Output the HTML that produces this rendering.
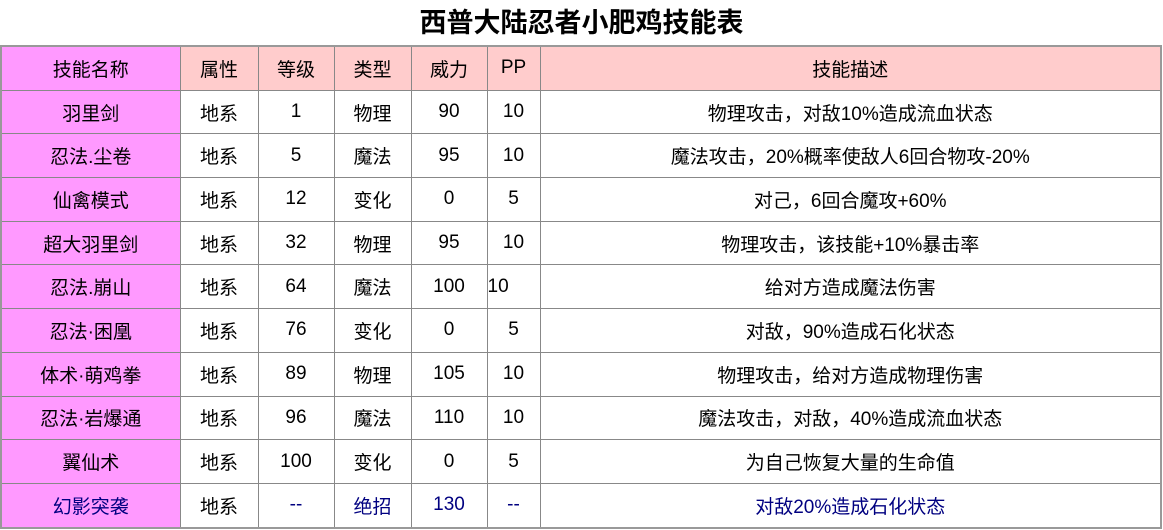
<!DOCTYPE html><html><head><meta charset="utf-8"><style>
body{margin:0;background:#fff;width:1163px;height:530px;overflow:hidden;font-family:"Liberation Sans","Noto Sans CJK SC",sans-serif;}
h1{margin:0;height:45px;line-height:46px;text-align:center;font-size:27px;font-weight:bold;color:#000;}
table{position:absolute;top:45px;left:0;width:1162px;border-collapse:collapse;border:2px solid #999;font-size:19px;}
td{border:1px solid #888;text-align:center;height:42.7px;padding:0;color:#000;}
tr.h td{background:#FFCCCC;}
tr.h td.n,td.n{background:#FF99FF;}
tr.b td{color:#000080;}
tr.b td.k{color:#000;}
</style></head><body>
<h1>西普大陆忍者小肥鸡技能表</h1>
<table>
<colgroup><col style="width:179px"><col style="width:78px"><col style="width:76px"><col style="width:77px"><col style="width:76px"><col style="width:53px"><col></colgroup>
<tr class="h"><td class="n">技能名称</td><td>属性</td><td>等级</td><td>类型</td><td>威力</td><td>PP</td><td>技能描述</td></tr>
<tr><td class="n">羽里剑</td><td>地系</td><td>1</td><td>物理</td><td>90</td><td>10</td><td>物理攻击，对敌10%造成流血状态</td></tr>
<tr><td class="n">忍法.尘卷</td><td>地系</td><td>5</td><td>魔法</td><td>95</td><td>10</td><td>魔法攻击，20%概率使敌人6回合物攻-20%</td></tr>
<tr><td class="n">仙禽模式</td><td>地系</td><td>12</td><td>变化</td><td>0</td><td>5</td><td>对己，6回合魔攻+60%</td></tr>
<tr><td class="n">超大羽里剑</td><td>地系</td><td>32</td><td>物理</td><td>95</td><td>10</td><td>物理攻击，该技能+10%暴击率</td></tr>
<tr><td class="n">忍法.崩山</td><td>地系</td><td>64</td><td>魔法</td><td>100</td><td style="text-align:left">10</td><td>给对方造成魔法伤害</td></tr>
<tr><td class="n">忍法·困凰</td><td>地系</td><td>76</td><td>变化</td><td>0</td><td>5</td><td>对敌，90%造成石化状态</td></tr>
<tr><td class="n">体术·萌鸡拳</td><td>地系</td><td>89</td><td>物理</td><td>105</td><td>10</td><td>物理攻击，给对方造成物理伤害</td></tr>
<tr><td class="n">忍法·岩爆通</td><td>地系</td><td>96</td><td>魔法</td><td>110</td><td>10</td><td>魔法攻击，对敌，40%造成流血状态</td></tr>
<tr><td class="n">翼仙术</td><td>地系</td><td>100</td><td>变化</td><td>0</td><td>5</td><td>为自己恢复大量的生命值</td></tr>
<tr class="b"><td class="n">幻影突袭</td><td class="k">地系</td><td>--</td><td>绝招</td><td>130</td><td>--</td><td>对敌20%造成石化状态</td></tr>
</table>
</body></html>
